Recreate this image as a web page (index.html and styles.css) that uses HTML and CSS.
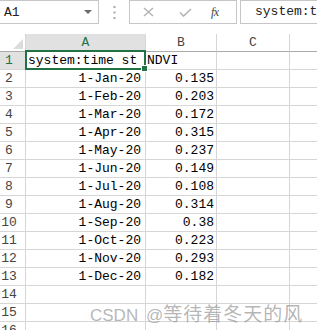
FILE: index.html
```html
<!DOCTYPE html>
<html>
<head>
<meta charset="utf-8">
<link rel="stylesheet" href="styles.css">
</head>
<body>
<div class="toolbar">
  <div class="namebox">
    <span class="name">A1</span>
    <svg class="arrow" width="8" height="5" viewBox="0 0 8 5"><path d="M0 0H8L4 4Z" fill="#6b6b6b"/></svg>
  </div>
  <div class="dots">
    <svg width="3" height="15" viewBox="0 0 3 15"><rect x="0.5" y="1" width="2" height="2" fill="#a8a8a8"/><rect x="0.5" y="6.5" width="2" height="2" fill="#a8a8a8"/><rect x="0.5" y="12" width="2" height="2" fill="#a8a8a8"/></svg>
  </div>
  <div class="btnbox">
    <svg class="btn-x" width="11" height="10" viewBox="0 0 11 10"><path d="M1 1L10 9M10 1L1 9" stroke="#b4b4b4" stroke-width="1.5" fill="none"/></svg>
    <svg class="btn-ok" width="13" height="9" viewBox="0 0 13 9"><path d="M1 4.5L4.5 8L12 1" stroke="#b4b4b4" stroke-width="1.6" fill="none"/></svg>
    <span class="fx">fx</span>
  </div>
  <div class="formula">system:time start</div>
</div>

<div class="sheet">
  <div class="corner"><span class="tri"></span></div>
  <div class="colh sel">A</div>
  <div class="colh">B</div>
  <div class="colh">C</div>
  <div class="colh last"></div>

  <div class="rowh sel">1</div><div class="cell txt">system:time st</div><div class="cell txt b">NDVI</div><div class="cell"></div><div class="cell last"></div>
  <div class="rowh">2</div><div class="cell num">1-Jan-20</div><div class="cell num b">0.135</div><div class="cell"></div><div class="cell last"></div>
  <div class="rowh">3</div><div class="cell num">1-Feb-20</div><div class="cell num b">0.203</div><div class="cell"></div><div class="cell last"></div>
  <div class="rowh">4</div><div class="cell num">1-Mar-20</div><div class="cell num b">0.172</div><div class="cell"></div><div class="cell last"></div>
  <div class="rowh">5</div><div class="cell num">1-Apr-20</div><div class="cell num b">0.315</div><div class="cell"></div><div class="cell last"></div>
  <div class="rowh">6</div><div class="cell num">1-May-20</div><div class="cell num b">0.237</div><div class="cell"></div><div class="cell last"></div>
  <div class="rowh">7</div><div class="cell num">1-Jun-20</div><div class="cell num b">0.149</div><div class="cell"></div><div class="cell last"></div>
  <div class="rowh">8</div><div class="cell num">1-Jul-20</div><div class="cell num b">0.108</div><div class="cell"></div><div class="cell last"></div>
  <div class="rowh">9</div><div class="cell num">1-Aug-20</div><div class="cell num b">0.314</div><div class="cell"></div><div class="cell last"></div>
  <div class="rowh">10</div><div class="cell num">1-Sep-20</div><div class="cell num b">0.38</div><div class="cell"></div><div class="cell last"></div>
  <div class="rowh">11</div><div class="cell num">1-Oct-20</div><div class="cell num b">0.223</div><div class="cell"></div><div class="cell last"></div>
  <div class="rowh">12</div><div class="cell num">1-Nov-20</div><div class="cell num b">0.293</div><div class="cell"></div><div class="cell last"></div>
  <div class="rowh">13</div><div class="cell num">1-Dec-20</div><div class="cell num b">0.182</div><div class="cell"></div><div class="cell last"></div>
  <div class="rowh">14</div><div class="cell"></div><div class="cell"></div><div class="cell"></div><div class="cell last"></div>
  <div class="rowh">15</div><div class="cell"></div><div class="cell"></div><div class="cell"></div><div class="cell last"></div>
  <div class="rowh">16</div><div class="cell"></div><div class="cell"></div><div class="cell"></div><div class="cell last"></div>

  <div class="selection"><span class="handle"></span></div>
</div>

<div class="watermark">CSDN <span class="at">@</span><span class="cjk">等待着冬天的风</span></div>
</body>
</html>
```

FILE: styles.css
```css
html, body {
  margin: 0;
  padding: 0;
  background: #fff;
  overflow: hidden;
}
body {
  width: 317px;
  height: 330px;
  position: relative;
  font-family: "Liberation Mono", "DejaVu Sans Mono", monospace;
  color: #000;
}

.toolbar {
  display: flex;
  height: 24px;
  align-items: stretch;
}
.namebox {
  width: 99px;
  box-sizing: border-box;
  border-top: 1px solid #c6c6c6;
  border-right: 1px solid #c6c6c6;
  border-bottom: 1px solid #c6c6c6;
  display: flex;
  align-items: center;
  justify-content: space-between;
  padding: 0 6px 0 4px;
}
.name {
  font-size: 13px;
  color: #222;
  padding-top: 1px;
}
.dots {
  width: 30px;
  display: flex;
  align-items: center;
  justify-content: center;
}
.btnbox {
  width: 108px;
  box-sizing: border-box;
  border: 1px solid #c6c6c6;
  display: flex;
  align-items: center;
  padding-left: 13px;
}
.btn-x { margin-right: 25px; }
.btn-ok { margin-right: 19px; }
.fx {
  font-family: "Liberation Serif", serif;
  font-style: italic;
  font-size: 12px;
  color: #444;
  letter-spacing: -0.5px;
}
.formula {
  margin-left: 3px;
  flex: 1;
  box-sizing: border-box;
  border: 1px solid #c6c6c6;
  border-right: none;
  font-size: 13px;
  padding: 3px 0 0 14px;
  white-space: nowrap;
  overflow: hidden;
  color: #222;
}

.sheet {
  position: relative;
  margin-top: 10px;
  display: grid;
  grid-template-columns: 26px 120px 71px 73px 1fr;
  grid-auto-rows: 18px;
}
.sheet > div {
  box-sizing: border-box;
  border-right: 1px solid #d6d6d6;
  border-bottom: 1px solid #d6d6d6;
  overflow: hidden;
  white-space: nowrap;
}
.sheet > div.last { border-right: none; }

.corner {
  position: relative;
  border-bottom-color: #ababab !important;
}
.tri {
  position: absolute;
  right: 2px;
  bottom: 2px;
  width: 0;
  height: 0;
  border-left: 10px solid transparent;
  border-bottom: 10px solid #dcdcdc;
}
.colh {
  font-size: 13px;
  color: #444;
  text-align: center;
  line-height: 17px;
  border-bottom-color: #ababab !important;
}
.colh.sel {
  background: #e1e1e1;
  color: #217346;
}
.rowh {
  font-size: 13px;
  color: #444;
  text-align: center;
  padding-right: 7px;
  line-height: 18px;
}
.rowh.sel {
  background: #e1e1e1;
  color: #217346;
}
.cell {
  font-size: 13px;
  line-height: 18px;
}
.cell.txt {
  padding-left: 2px;
}
.cell.txt.b {
  padding-left: 1px;
}
.cell.num {
  text-align: right;
  padding-right: 4px;
}
.cell.num.b {
  padding-right: 2px;
}

.selection {
  position: absolute;
  left: 25px;
  top: 16px;
  width: 121px;
  height: 20px;
  box-sizing: border-box;
  border: 2px solid #217346 !important;
  overflow: visible !important;
}
.handle {
  position: absolute;
  right: -4px;
  bottom: -4px;
  width: 5px;
  height: 5px;
  background: #217346;
  border: 1px solid #fff;
}

.watermark {
  position: absolute;
  left: 90px;
  top: 299px;
  font-family: "Liberation Sans", "Noto Sans CJK SC", sans-serif;
  font-size: 17px;
  color: rgba(150, 150, 150, 0.7);
  white-space: nowrap;
}
.watermark .at {
  margin-left: 3px;
}
.watermark .cjk {
  font-family: "Noto Sans CJK SC", sans-serif;
  font-size: 19px;
  letter-spacing: 1px;
}
```
